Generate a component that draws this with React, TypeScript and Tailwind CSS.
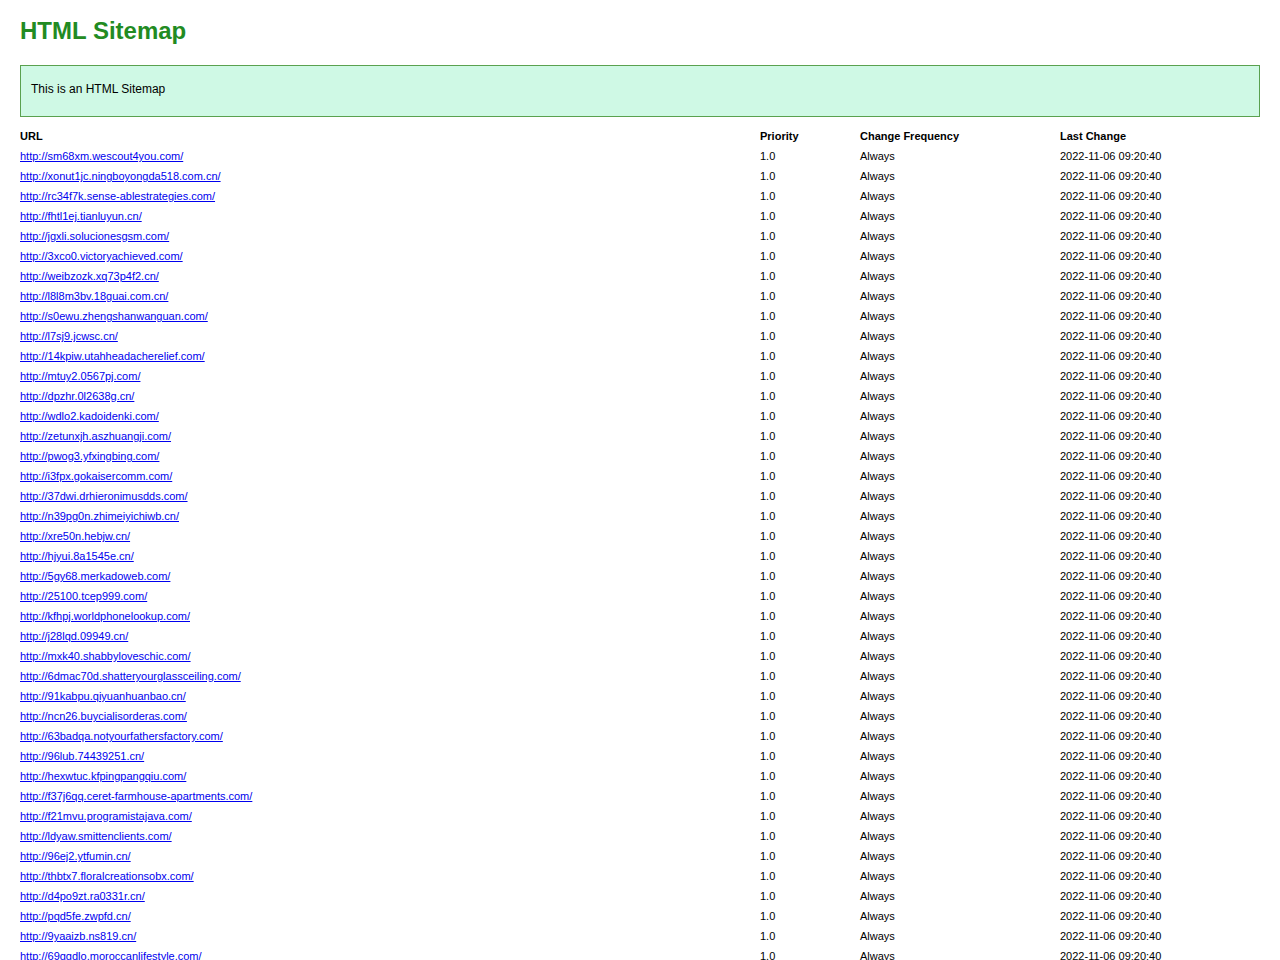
const urls = [
  "http://sm68xm.wescout4you.com/",
  "http://xonut1jc.ningboyongda518.com.cn/",
  "http://rc34f7k.sense-ablestrategies.com/",
  "http://fhtl1ej.tianluyun.cn/",
  "http://jgxli.solucionesgsm.com/",
  "http://3xco0.victoryachieved.com/",
  "http://weibzozk.xq73p4f2.cn/",
  "http://l8l8m3bv.18guai.com.cn/",
  "http://s0ewu.zhengshanwanguan.com/",
  "http://l7sj9.jcwsc.cn/",
  "http://14kpiw.utahheadacherelief.com/",
  "http://mtuy2.0567pj.com/",
  "http://dpzhr.0l2638g.cn/",
  "http://wdlo2.kadoidenki.com/",
  "http://zetunxjh.aszhuangji.com/",
  "http://pwog3.yfxingbing.com/",
  "http://i3fpx.gokaisercomm.com/",
  "http://37dwi.drhieronimusdds.com/",
  "http://n39pg0n.zhimeiyichiwb.cn/",
  "http://xre50n.hebjw.cn/",
  "http://hjyui.8a1545e.cn/",
  "http://5gy68.merkadoweb.com/",
  "http://25100.tcep999.com/",
  "http://kfhpj.worldphonelookup.com/",
  "http://j28lqd.09949.cn/",
  "http://mxk40.shabbyloveschic.com/",
  "http://6dmac70d.shatteryourglassceiling.com/",
  "http://91kabpu.qiyuanhuanbao.cn/",
  "http://ncn26.buycialisorderas.com/",
  "http://63badqa.notyourfathersfactory.com/",
  "http://96lub.74439251.cn/",
  "http://hexwtuc.kfpingpangqiu.com/",
  "http://f37j6qq.ceret-farmhouse-apartments.com/",
  "http://f21mvu.programistajava.com/",
  "http://ldyaw.smittenclients.com/",
  "http://96ej2.ytfumin.cn/",
  "http://thbtx7.floralcreationsobx.com/",
  "http://d4po9zt.ra0331r.cn/",
  "http://pqd5fe.zwpfd.cn/",
  "http://9yaaizb.ns819.cn/",
  "http://69ggdlo.moroccanlifestyle.com/",
];

export default function App() {
  return (
    <div className="bg-white px-5 pt-[16px] font-['Helvetica','Liberation_Sans',Arial,sans-serif] text-black">
      <h1 className="text-[24px] leading-[30px] font-bold text-[#228b22]">HTML Sitemap</h1>
      <div className="mt-[19px] h-[52px] border border-[#5aa14f] bg-[#cff9e5] px-[10px] pt-[16px] text-[12px] leading-[14px]">
        This is an HTML Sitemap
      </div>
      <div className="mt-[9px] grid grid-cols-[740px_100px_200px_200px] text-[11px]">
        <div className="h-[20px] leading-[20px] font-bold">URL</div>
        <div className="h-[20px] leading-[20px] font-bold">Priority</div>
        <div className="h-[20px] leading-[20px] font-bold">Change Frequency</div>
        <div className="h-[20px] leading-[20px] font-bold">Last Change</div>
        {urls.map((u) => (
          <div key={u} className="contents">
            <div className="h-[20px] leading-[20px]">
              <a href={u} className="text-[#0000ee] underline">{u}</a>
            </div>
            <div className="h-[20px] leading-[20px]">1.0</div>
            <div className="h-[20px] leading-[20px]">Always</div>
            <div className="h-[20px] leading-[20px]">2022-11-06 09:20:40</div>
          </div>
        ))}
      </div>
    </div>
  );
}
